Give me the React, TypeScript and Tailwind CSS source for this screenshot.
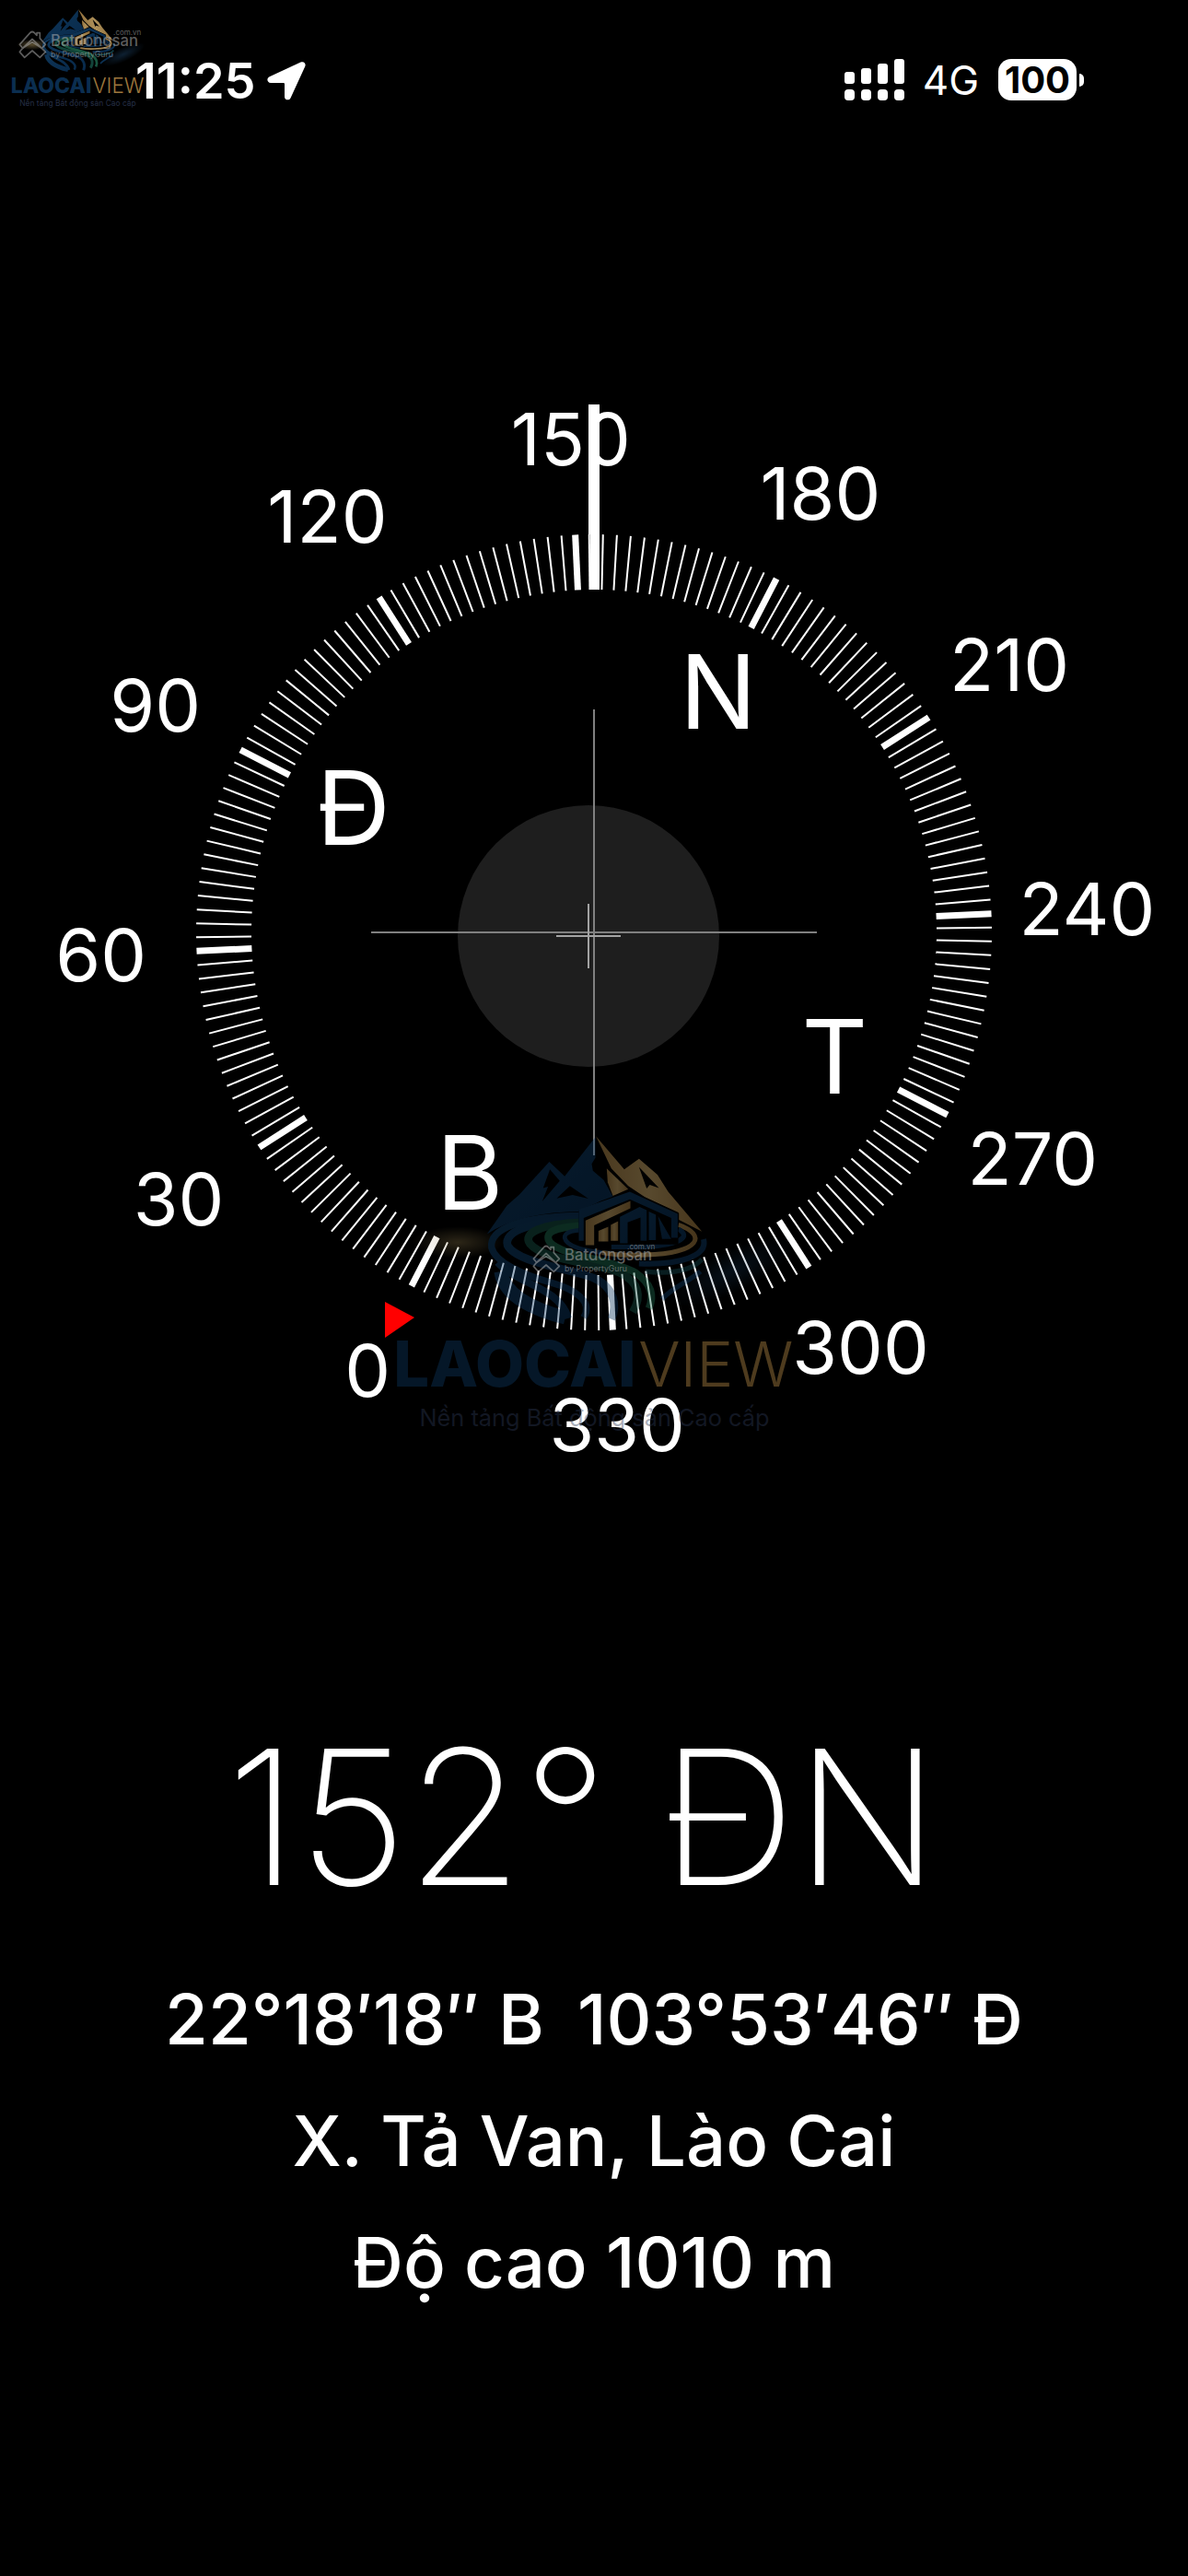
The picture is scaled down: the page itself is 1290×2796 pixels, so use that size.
import React from 'react';

const HEADING = 152.7;

const marks = Array.from({ length: 12 }, (_, i) => i * 30);
const ticks = Array.from({ length: 180 }, (_, i) => i * 2);
const cardinals = [
    { label: 'B', deg: 0 },
    { label: 'Đ', deg: 90 },
    { label: 'N', deg: 180 },
    { label: 'T', deg: 270 },
];

const polar = (deg: number, radius: number) => {
    const rad = ((deg - HEADING) * Math.PI) / 180;
    return { x: Math.sin(rad) * radius, y: -Math.cos(rad) * radius };
};

const SignalIcon = () => (
    <svg width="65" height="45" viewBox="0 0 65 45" fill="white" aria-hidden="true">
        <rect x="0" y="14" width="11" height="13" rx="3" />
        <rect x="18" y="10" width="11" height="17" rx="3" />
        <rect x="36" y="5" width="11" height="22" rx="3" />
        <rect x="54" y="0" width="11" height="27" rx="3" />
        <rect x="0" y="33" width="11" height="12" rx="4" />
        <rect x="18" y="33" width="11" height="12" rx="4" />
        <rect x="36" y="33" width="11" height="12" rx="4" />
        <rect x="54" y="33" width="11" height="12" rx="4" />
    </svg>
);

const LocationIcon = () => (
    <svg width="42" height="42" viewBox="0 0 42 42" fill="white" aria-hidden="true">
        <path d="M36.5 0.6C40 -0.8 42.6 1.8 41.2 5.2L25.6 39.2C24 42.6 19 41.8 19 38V24.5C19 23.4 18.4 23 17.5 23H4C0 23 -1 18 2.6 16.2Z" />
    </svg>
);

const StatusBar = () => (
    <header className="flex items-start justify-between pt-16 pl-[147px] pr-[113px]">
        <div className="flex items-center gap-3 h-[48px]">
            <span className="text-[54px] leading-none font-semibold">11:25</span>
            <LocationIcon />
        </div>
        <div className="flex items-center h-[45px]">
            <SignalIcon />
            <span className="ml-5 text-[44px] leading-none">4G</span>
            <span className="ml-[21px] flex items-center justify-center w-[85px] h-[45px] rounded-[14px] bg-white text-black text-[40px] leading-none font-bold">
                100
            </span>
            <span className="ml-[3px] w-[5px] h-[14px] rounded-r-full bg-white" />
        </div>
    </header>
);

const Logo = ({ className, id }: { className: string; id: string }) => (
    <svg className={className} viewBox="65 90 1340 970" overflow="visible" fontFamily="Inter, sans-serif" aria-hidden="true">
        <defs>
            <radialGradient id={`${id}-sand`}>
                <stop offset="0" stopColor="#a08a55" stopOpacity="0.7" />
                <stop offset="1" stopColor="#a08a55" stopOpacity="0" />
            </radialGradient>
            <radialGradient id={`${id}-mist`}>
                <stop offset="0" stopColor="#1d4468" stopOpacity="0.6" />
                <stop offset="1" stopColor="#1d4468" stopOpacity="0" />
            </radialGradient>
            <linearGradient id={`${id}-blue`} x1="0" y1="0" x2="1" y2="1">
                <stop offset="0" stopColor="#12436f" />
                <stop offset="1" stopColor="#0b355e" />
            </linearGradient>
            <linearGradient id={`${id}-gold`} x1="0" y1="0" x2="1" y2="0">
                <stop offset="0" stopColor="#b88e4c" />
                <stop offset="0.5" stopColor="#dbb672" />
                <stop offset="1" stopColor="#b08645" />
            </linearGradient>
        </defs>
        <ellipse cx="290" cy="445" rx="150" ry="52" fill={`url(#${id}-sand)`} />
        <ellipse cx="1180" cy="540" rx="230" ry="70" transform="rotate(-25 1180 540)" fill={`url(#${id}-mist)`} />

        {/* mountains */}
        <path
            d="M385 418L450 325L490 290L588 183L638 230L738 103L738 170L726 190L730 212L765 242L795 296L752 312L690 345Q500 345 385 418Z"
            fill={`url(#${id}-blue)`}
        />
        <path d="M590 208L622 245L565 312L584 264L568 268Z" fill="black" />
        <path d="M612 302L655 262L715 303L664 291Z" fill="black" />
        <path
            d="M740 100L832 208L880 173L940 225L975 280L1085 410L1010 372V350L900 298L845 262L790 205Z"
            fill={`url(#${id}-gold)`}
        />
        <path d="M775 205L845 272L795 294L778 250Z" fill={`url(#${id}-gold)`} />
        <path d="M880 200L945 268L915 258L905 270Z" fill="black" />

        {/* terraces and river */}
        <g fill="none" strokeLinecap="butt">
            <path d="M690 358C500 360 392 400 400 462C412 510 500 550 590 575C680 600 730 640 700 690" stroke={`url(#${id}-blue)`} strokeWidth="22" />
            <path d="M690 370C520 378 440 410 452 455C480 510 650 530 730 560C800 590 810 650 790 695" stroke={`url(#${id}-blue)`} strokeWidth="26" />
            <path d="M690 380C560 386 500 415 525 450C570 505 740 510 820 545C880 575 890 620 860 672" stroke="#175448" strokeWidth="26" />
            <path d="M690 392C600 396 570 415 590 445C630 490 790 500 870 545C920 580 930 620 912 660" stroke="#1f6b50" strokeWidth="24" />
            <path d="M690 405C640 408 625 425 650 448C680 470 740 478 800 480" stroke={`url(#${id}-blue)`} strokeWidth="14" />
            <path d="M430 540C440 610 520 660 640 690" stroke={`url(#${id}-blue)`} strokeWidth="44" />
            <path d="M420 510C480 580 620 590 650 692" stroke={`url(#${id}-blue)`} strokeWidth="24" />
            <path d="M1008 388C1100 420 1085 480 900 486C850 488 800 486 760 478" stroke={`url(#${id}-gold)`} strokeWidth="15" />
            <path d="M1008 402C1050 425 1020 452 900 460H790" stroke={`url(#${id}-blue)`} strokeWidth="16" />
            <path d="M1090 435C1105 490 1010 520 880 514" stroke={`url(#${id}-blue)`} strokeWidth="18" />
            <path d="M1085 500C1050 540 980 548 900 540" stroke="#154a52" strokeWidth="16" />
            <path d="M1080 540C1040 575 990 590 955 630" stroke={`url(#${id}-blue)`} strokeWidth="16" />
        </g>

        {/* house */}
        <path d="M684 340L850 276L1008 348V452H684Z" fill="black" />
        <path d="M684 338L850 280L1006 352V430H985V366L850 305L700 366V440H684Z" fill={`url(#${id}-blue)`} />
        <path d="M706 374L852 310V334L734 390V454H706Z" fill={`url(#${id}-gold)`} />
        <path d="M748 408L780 394V442H748Z" fill={`url(#${id}-gold)`} />
        <path d="M788 388L812 376V440H788Z" fill={`url(#${id}-gold)`} />
        <path d="M818 362L882 330L905 340V440H885V364L843 380V448H818Z" fill={`url(#${id}-blue)`} />
        <path d="M912 345L935 355V438H912Z M942 360L985 434H955Z" fill={`url(#${id}-blue)`} />

        <text x="870" y="915" fontSize="206" fontWeight="800" textAnchor="end" fill="#0e3a64">LAOCAI</text>
        <text x="878" y="915" fontSize="202" fontWeight="300" fill="#c3954c">VIEW</text>
        <text x="735" y="1042" fontSize="76" textAnchor="middle" fill="#2f3b58">Nền tảng Bất động sản Cao cấp</text>
    </svg>
);

const AgencyBadge = ({ className }: { className: string }) => (
    <svg className={className} viewBox="0 0 402 96" overflow="visible" fill="none" fontFamily="Inter, sans-serif" aria-hidden="true">
        <g stroke="#b8b8b8" strokeWidth="5" strokeLinejoin="round">
            <path d="M4 46L38 8Q45 1 52 8L60 16V8H70V26L88 46L76 58L45 28L14 58Z" />
            <path d="M14 58L4 70L20 88L45 66L70 88L88 70L76 58L45 38Z" />
        </g>
        <g fill="#b8b8b8">
            <text x="105" y="52" fontSize="50" fontWeight="500">Batdongsan</text>
            <text x="400" y="14" fontSize="24" textAnchor="end">.com.vn</text>
            <text x="105" y="88" fontSize="26">by PropertyGuru</text>
        </g>
    </svg>
);

const Compass = () => (
    <svg className="block w-full" viewBox="-645 -612 1290 1224" fill="white" fontFamily="Inter, sans-serif" role="img" aria-label="La bàn">
        <circle cx="-6" cy="4" r="142" fill="#1e1e1e" />
        <path d="M0 -242V242M-242 0H242" stroke="#808080" strokeWidth="2" />
        <path d="M-6 -31V39M-41 4H29" stroke="#a3a3a3" strokeWidth="2" />

        {ticks.map((deg) => (
            <line
                key={deg}
                y1="-432"
                y2="-372"
                stroke="white"
                strokeWidth={deg % 30 === 0 ? 7 : 2}
                transform={`rotate(${deg - HEADING})`}
            />
        ))}

        {marks.map((deg) => {
            const { x, y } = polar(deg, 536);
            return (
                <text key={deg} x={x} y={y + 28} fontSize="79" textAnchor="middle">
                    {deg}
                </text>
            );
        })}

        {cardinals.map(({ label, deg }) => {
            const { x, y } = polar(deg, 294);
            return (
                <text key={label} x={x} y={y + 40} fontSize="111" textAnchor="middle">
                    {label}
                </text>
            );
        })}

        <rect x="-6" y="-573" width="12" height="141" />
        <rect x="-4" y="-432" width="10" height="60" />
        <path d="M-227 401L-195 418L-227 440Z" fill="#ff0000" />
    </svg>
);

const App = () => {
    return (
        <main className="relative min-h-screen overflow-hidden bg-black text-white font-['Inter',sans-serif]">
            <Logo id="corner" className="absolute left-[10px] top-[9px] w-[149px] opacity-80" />
            <AgencyBadge className="absolute left-[20px] top-[33px] w-[134px] opacity-50" />
            <div className="relative">
                <StatusBar />
            </div>

            <section className="relative mt-72">
                <Compass />
                <div className="absolute inset-x-0 top-[830px] flex justify-center">
                    <Logo id="center" className="w-[447px] opacity-40" />
                </div>
                <div className="absolute inset-x-0 top-[951px] flex justify-center">
                    <AgencyBadge className="w-[134px] opacity-50" />
                </div>
            </section>

            <section className="mt-[246px] text-center">
                <h1 className="pr-6 text-[204px] leading-none font-extralight">152° ĐN</h1>
                <div className="mt-[51px] text-[76px] leading-[132px] font-medium">
                    <p className="flex justify-center gap-9">
                        <span>22°18′18″ B</span>
                        <span>103°53′46″ Đ</span>
                    </p>
                    <p>X. Tả Van, Lào Cai</p>
                    <p>Độ cao 1010 m</p>
                </div>
            </section>
        </main>
    );
};

export default App;
